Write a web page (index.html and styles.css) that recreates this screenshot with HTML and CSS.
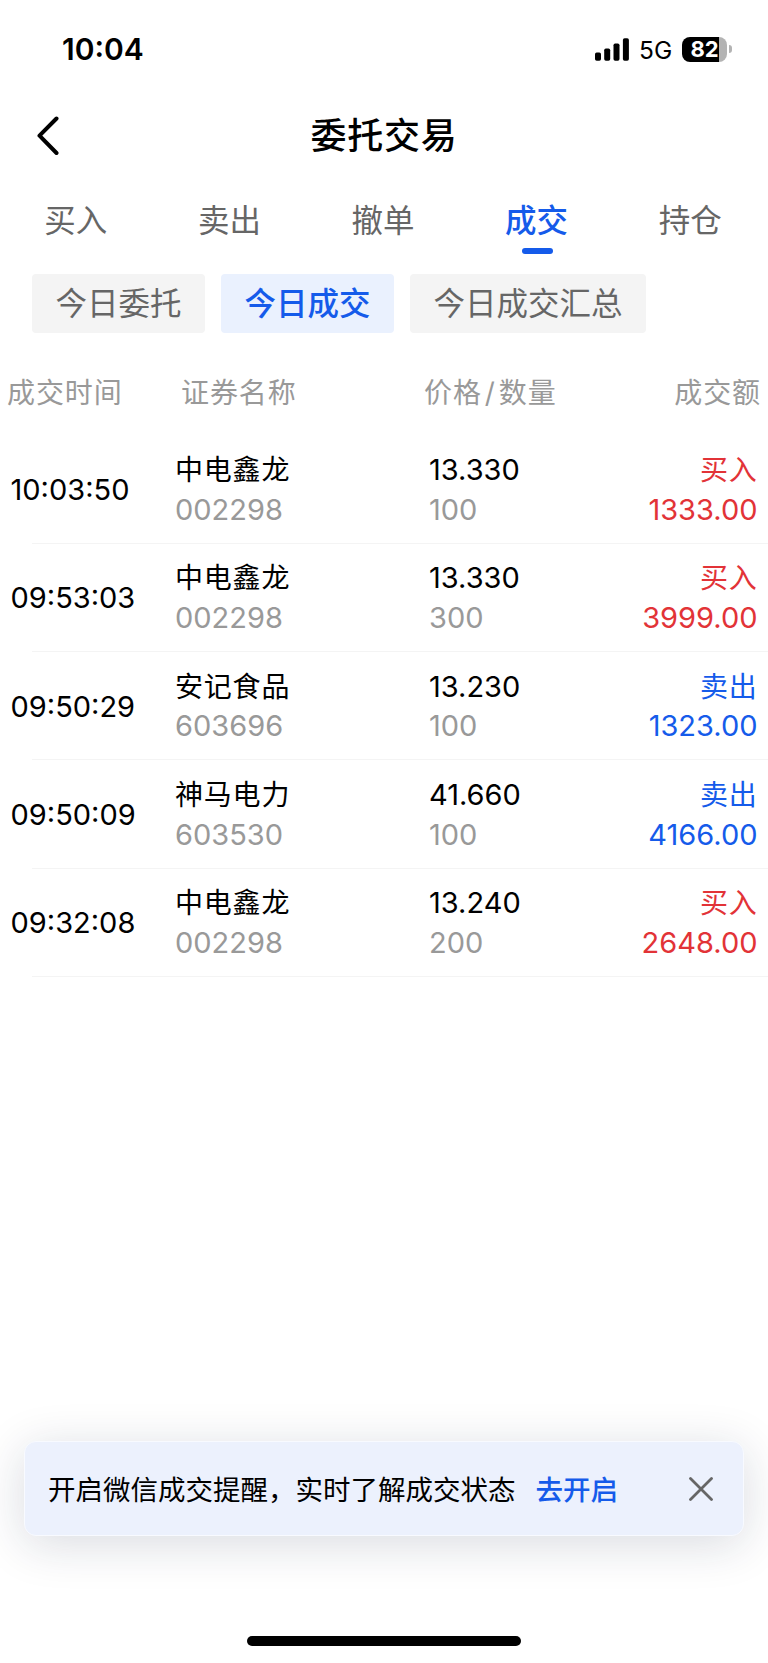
FILE: index.html
```
<!DOCTYPE html>
<html lang="zh-CN">
	<head>
		<meta charset="utf-8">
		<title>委托交易</title>
		<link rel="stylesheet" href="styles.css">
	</head>
	<body>
	<div class="page">
		<!--状态栏-->
		<div class="status">
			<span class="clock">10:04</span>
			<svg class="signal" width="34" height="23" viewBox="0 0 34 23">
				<rect x="0" y="14.5" width="6" height="8.2" rx="1.7"/>
				<rect x="9.2" y="10.5" width="6" height="12.2" rx="1.7"/>
				<rect x="18.5" y="5.5" width="6" height="17.2" rx="1.7"/>
				<rect x="27.9" y="0.3" width="6" height="22.4" rx="1.7"/>
			</svg>
			<span class="net">5G</span>
			<div class="battery"><span>82</span></div>
			<i class="battery_cap"></i>
		</div>
		<!--标题-->
		<div class="nav">
			<svg class="back" width="24" height="40" viewBox="0 0 24 40">
				<path d="M20.5 2.5L3.5 19.7L20.5 37" fill="none" stroke="#000" stroke-width="4" stroke-linecap="round" stroke-linejoin="round"/>
			</svg>
			<h1>委托交易</h1>
		</div>
		<ul class="tab">
			<li>买入</li>
			<li>卖出</li>
			<li>撤单</li>
			<li class="active">成交</li>
			<li>持仓</li>
		</ul>
		<ul class="sub">
			<li>今日委托</li>
			<li class="active">今日成交</li>
			<li>今日成交汇总</li>
		</ul>
		<!--成交列表-->
		<div class="head">
			<span>成交时间</span>
			<span>证券名称</span>
			<span>价格<b>/</b>数量</span>
			<span>成交额</span>
		</div>
		<ul class="list">
			<li>
				<div class="time">10:03:50</div>
				<div class="name"><p>中电鑫龙</p><em>002298</em></div>
				<div class="price"><p>13.330</p><em>100</em></div>
				<div class="money buy"><p>买入</p><em>1333.00</em></div>
			</li>
			<li>
				<div class="time">09:53:03</div>
				<div class="name"><p>中电鑫龙</p><em>002298</em></div>
				<div class="price"><p>13.330</p><em>300</em></div>
				<div class="money buy"><p>买入</p><em>3999.00</em></div>
			</li>
			<li>
				<div class="time">09:50:29</div>
				<div class="name"><p>安记食品</p><em>603696</em></div>
				<div class="price"><p>13.230</p><em>100</em></div>
				<div class="money sell"><p>卖出</p><em>1323.00</em></div>
			</li>
			<li>
				<div class="time">09:50:09</div>
				<div class="name"><p>神马电力</p><em>603530</em></div>
				<div class="price"><p>41.660</p><em>100</em></div>
				<div class="money sell"><p>卖出</p><em>4166.00</em></div>
			</li>
			<li>
				<div class="time">09:32:08</div>
				<div class="name"><p>中电鑫龙</p><em>002298</em></div>
				<div class="price"><p>13.240</p><em>200</em></div>
				<div class="money buy"><p>买入</p><em>2648.00</em></div>
			</li>
		</ul>
		<!--提醒-->
		<div class="notice">
			<span>开启微信成交提醒，实时了解成交状态</span>
			<a href="javascript:;">去开启</a>
			<svg class="close" width="24" height="24" viewBox="0 0 24 24">
				<path d="M1.5 1.5L22.5 22.5M22.5 1.5L1.5 22.5" fill="none" stroke="#666" stroke-width="2.8" stroke-linecap="round"/>
			</svg>
		</div>
		<div class="home"></div>
	</div>
	</body>
</html>
```
FILE: styles.css
```
*{margin:0;padding:0;list-style:none;box-sizing:border-box;}
body{background:#fff;color:#000;font-family:Inter,"Noto Sans CJK SC",sans-serif;}
em,i{font-style:normal;}
.page{width:768px;height:1663px;display:flex;flex-direction:column;overflow:hidden;}
/*状态栏*/
.status{height:98px;padding-left:62px;display:flex;align-items:center;}
.clock{width:533px;font-size:30px;font-weight:600;}
.net{width:43px;margin-left:10px;padding-top:2px;font-size:24.5px;}
.battery{width:45px;height:25px;border-radius:8px;background:linear-gradient(90deg,#000 37px,#b3b3b3 37px);color:#fff;font-size:22px;font-weight:700;line-height:25px;text-align:center;}
.battery_cap{width:3px;height:8px;margin-left:2px;border-radius:0 4px 4px 0;background:#b3b3b3;}
/*标题*/
.nav{height:76px;padding:0 36px;display:grid;grid-template-columns:24px 1fr 24px;align-items:center;}
.nav h1{font-size:36px;font-weight:500;line-height:50px;letter-spacing:.7px;text-align:center;}
/*选项卡*/
.tab{height:100px;display:grid;grid-template-columns:repeat(5,1fr);}
.tab li{padding-top:24px;font-size:31.5px;line-height:46px;color:#666;text-align:center;text-indent:-2px;}
.tab .active{color:#155bea;font-weight:500;}
.tab .active:after{content:"";display:block;width:31px;height:6px;margin:4px auto 0;border-radius:3px;background:#155bea;}
.sub{padding-left:32px;display:flex;gap:16px;}
.sub li{height:59px;padding:0 23.5px;border-radius:4px;background:#f4f4f4;font-size:31.5px;line-height:60px;color:#666;}
.sub .active{background:#eaf1fe;color:#155bea;font-weight:500;}
/*列表*/
.head{height:86px;margin-top:15px;padding:0 7px;display:grid;grid-template-columns:174px 243px 1fr auto;align-items:center;font-size:28px;letter-spacing:.9px;color:#999;}
.head b{padding:0 3px;font-weight:400;}
.list{padding-top:1.5px;}
.list li{height:108.3px;padding:0 10.5px 0 10.5px;display:grid;grid-template-columns:164.5px 254px 1fr auto;align-items:center;background:linear-gradient(#f4f4f4,#f4f4f4) 32px 100%/100% 1px no-repeat;font-size:29px;}
.list p,.list em{display:block;height:39.5px;line-height:39.5px;}
.list em{color:#999;}
.name p,.money p{padding-top:1px;font-size:28px;letter-spacing:.8px;}
.money{text-align:right;}
.list .buy,.list .buy em{color:#e23337;}
.list .sell,.list .sell em{color:#155bea;}
/*提醒*/
.notice{height:95px;margin:auto 24px 0;padding:0 30px 0 23px;display:flex;align-items:center;border:1px solid #f8faff;border-radius:12px;background:#ecf1fd;box-shadow:0 8px 48px rgba(20,30,60,.16);font-size:27.5px;}
.notice span,.notice a{padding-bottom:2px;}
.notice a{margin-left:20px;color:#155bea;font-weight:500;text-decoration:none;}
.close{margin-left:auto;}
.home{width:274px;height:10px;margin:100px auto 17px;border-radius:5px;background:#000;}
```
